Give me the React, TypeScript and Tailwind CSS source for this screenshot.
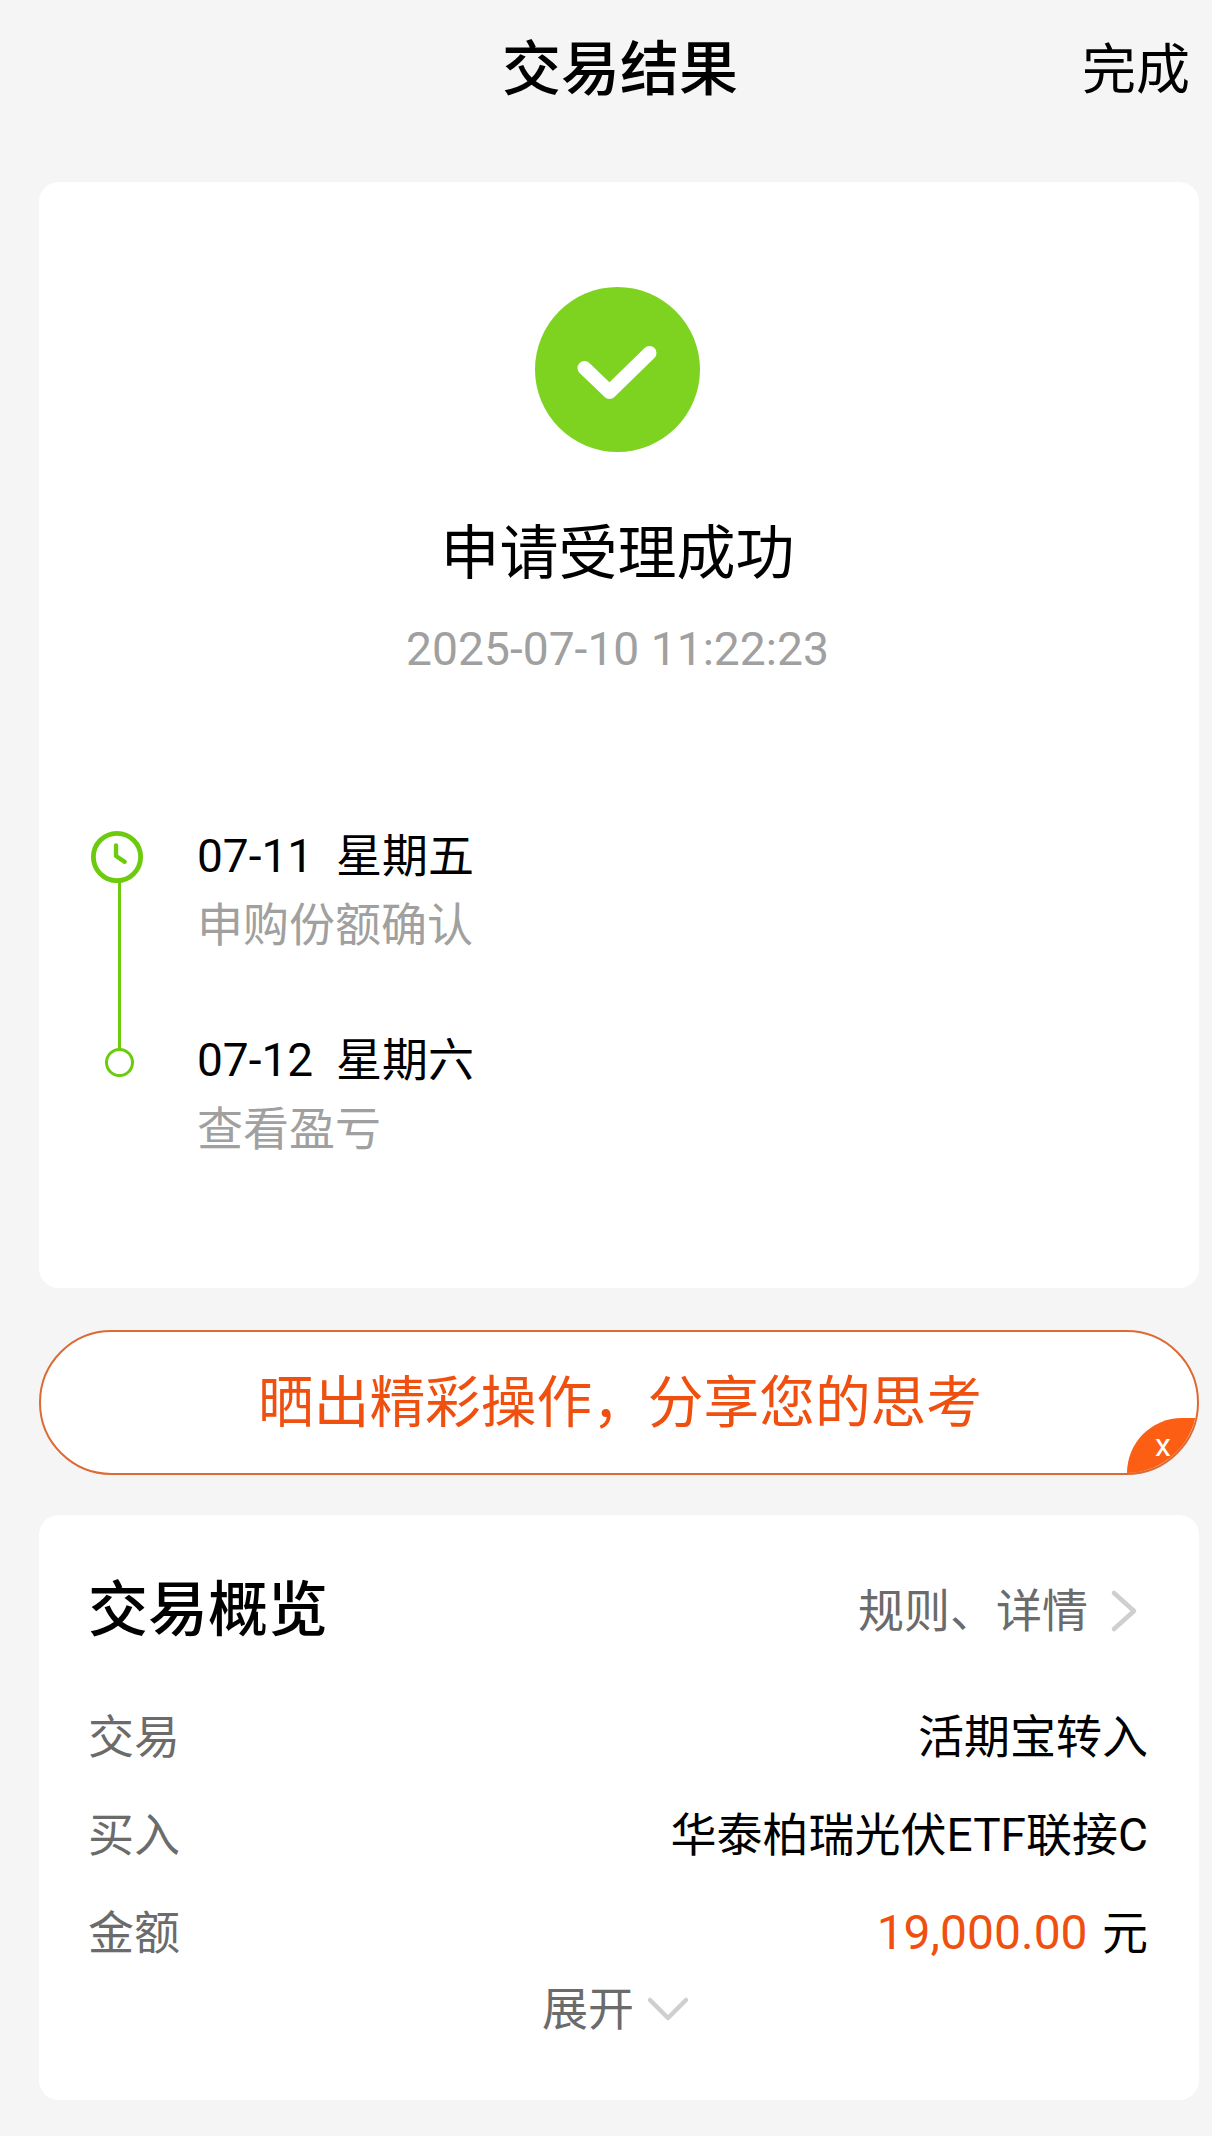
const FONT = 'font-["Roboto","Noto_Sans_CJK_SC",sans-serif]';

function Step({ title, note, first }: { title: string; note: string; first?: boolean }) {
  return (
    <div className={first ? "h-[204px]" : "h-[110px]"}>
      <div className="h-[60px] flex items-center text-[46px] leading-none text-black whitespace-pre">{title}</div>
      <div className="mt-[8px] h-[62px] flex items-center text-[46px] leading-none text-[#a0a0a0]">{note}</div>
    </div>
  );
}

function Row({ label, children }: { label: string; children: React.ReactNode }) {
  return (
    <div className="h-[98px] flex items-center justify-between text-[46px] leading-none">
      <span className="text-[#6b6b6b]">{label}</span>
      <span className="text-black">{children}</span>
    </div>
  );
}

export default function App() {
  return (
    <div className={`${FONT} w-[1212px] h-[2136px] bg-[#f5f5f5] overflow-hidden`}>
      <header className="relative h-[136px] pt-[2px] pl-[28px] flex items-center justify-center">
        <h1 className="text-[59px] leading-none font-medium text-black">交易结果</h1>
        <span className="absolute right-[22px] top-[44px] text-[54px] leading-none text-black">完成</span>
      </header>

      <section className="ml-[39px] mr-[13px] mt-[46px] h-[1106px] bg-white rounded-[20px] pt-[105px] pr-[3px] flex flex-col">
        <svg viewBox="0 0 165 165" className="w-[165px] h-[165px] self-center">
          <circle cx="82.5" cy="82.5" r="82.5" fill="#7ed321" />
          <path d="M49.5 81 L74.5 105 L114.5 66" fill="none" stroke="#fff" strokeWidth="14" strokeLinecap="round" strokeLinejoin="round" />
        </svg>
        <div className="mt-[72px] text-center text-[59px] leading-none text-black">申请受理成功</div>
        <div className="mt-[43px] text-center text-[46.2px] leading-none text-[#a0a0a0]">2025-07-10 11:22:23</div>

        <div className="mt-[154px] flex">
          <div className="w-[158px] relative shrink-0">
            <svg viewBox="0 0 56 56" className="absolute left-[51px] top-[4px] w-[54px] h-[54px]">
              <circle cx="28" cy="28" r="24.5" fill="none" stroke="#6ccb0c" strokeWidth="5" />
              <path d="M27 16 V27 L36 33" fill="none" stroke="#6ccb0c" strokeWidth="4.5" strokeLinecap="round" strokeLinejoin="round" />
            </svg>
            <div className="absolute left-[79px] top-[56px] w-[3px] h-[170px] bg-[#6ccb0c]" />
            <div className="absolute left-[66px] top-[222px] w-[29px] h-[29px] rounded-full border-[3px] border-[#6ccb0c] bg-white" />
          </div>
          <div>
            <Step first title={"07-11  星期五"} note="申购份额确认" />
            <Step title={"07-12  星期六"} note="查看盈亏" />
          </div>
        </div>
      </section>

      <div className="relative ml-[39px] mr-[13px] mt-[42px] h-[145px] rounded-full border-2 border-[#dd6a34] bg-white overflow-hidden flex items-center justify-center pt-[2px] pl-[2px]">
        <span className="text-[55.7px] leading-none text-[#f0500f]">{"晒出精彩操作\uFF0C分享您的思考"}</span>
        <span className="absolute right-0 bottom-0 w-[70px] h-[55px] bg-[#fc5f14] rounded-tl-[55px] flex items-center justify-center text-white text-[32px] leading-none pl-[2px] pb-[2px]">x</span>
      </div>

      <section className="ml-[39px] mr-[13px] mt-[40px] h-[585px] bg-white rounded-[20px] pl-[49px] pr-[51px] pt-[62px]">
        <div className="h-[68px] flex items-center justify-between">
          <h2 className="text-[60px] leading-none font-medium text-black">交易概览</h2>
          <span className="flex items-center text-[46px] leading-none text-[#6b6b6b]">
            规则、详情
            <svg viewBox="0 0 28 44" className="ml-[22px] mr-[10px] w-[28px] h-[44px]">
              <path d="M4 4 L24 22 L4 40" fill="none" stroke="#cfcfcf" strokeWidth="4.5" strokeLinecap="round" strokeLinejoin="round" />
            </svg>
          </span>
        </div>
        <div className="mt-[43px]">
          <Row label="交易">活期宝转入</Row>
          <Row label="买入">华泰柏瑞光伏ETF联接C</Row>
          <Row label="金额">
            <span className="text-[48px] text-[#f0500f] mr-[3px]">19,000.00</span> 元
          </Row>
        </div>
        <div className="mt-[4px] pr-[4px] flex items-center justify-center text-[46px] leading-none text-[#6b6b6b]">
          展开
          <svg viewBox="0 0 44 28" className="ml-[12px] w-[44px] h-[28px]">
            <path d="M4 5 L22 23 L40 5" fill="none" stroke="#cfcfcf" strokeWidth="4.5" strokeLinecap="round" strokeLinejoin="round" />
          </svg>
        </div>
      </section>
    </div>
  );
}
